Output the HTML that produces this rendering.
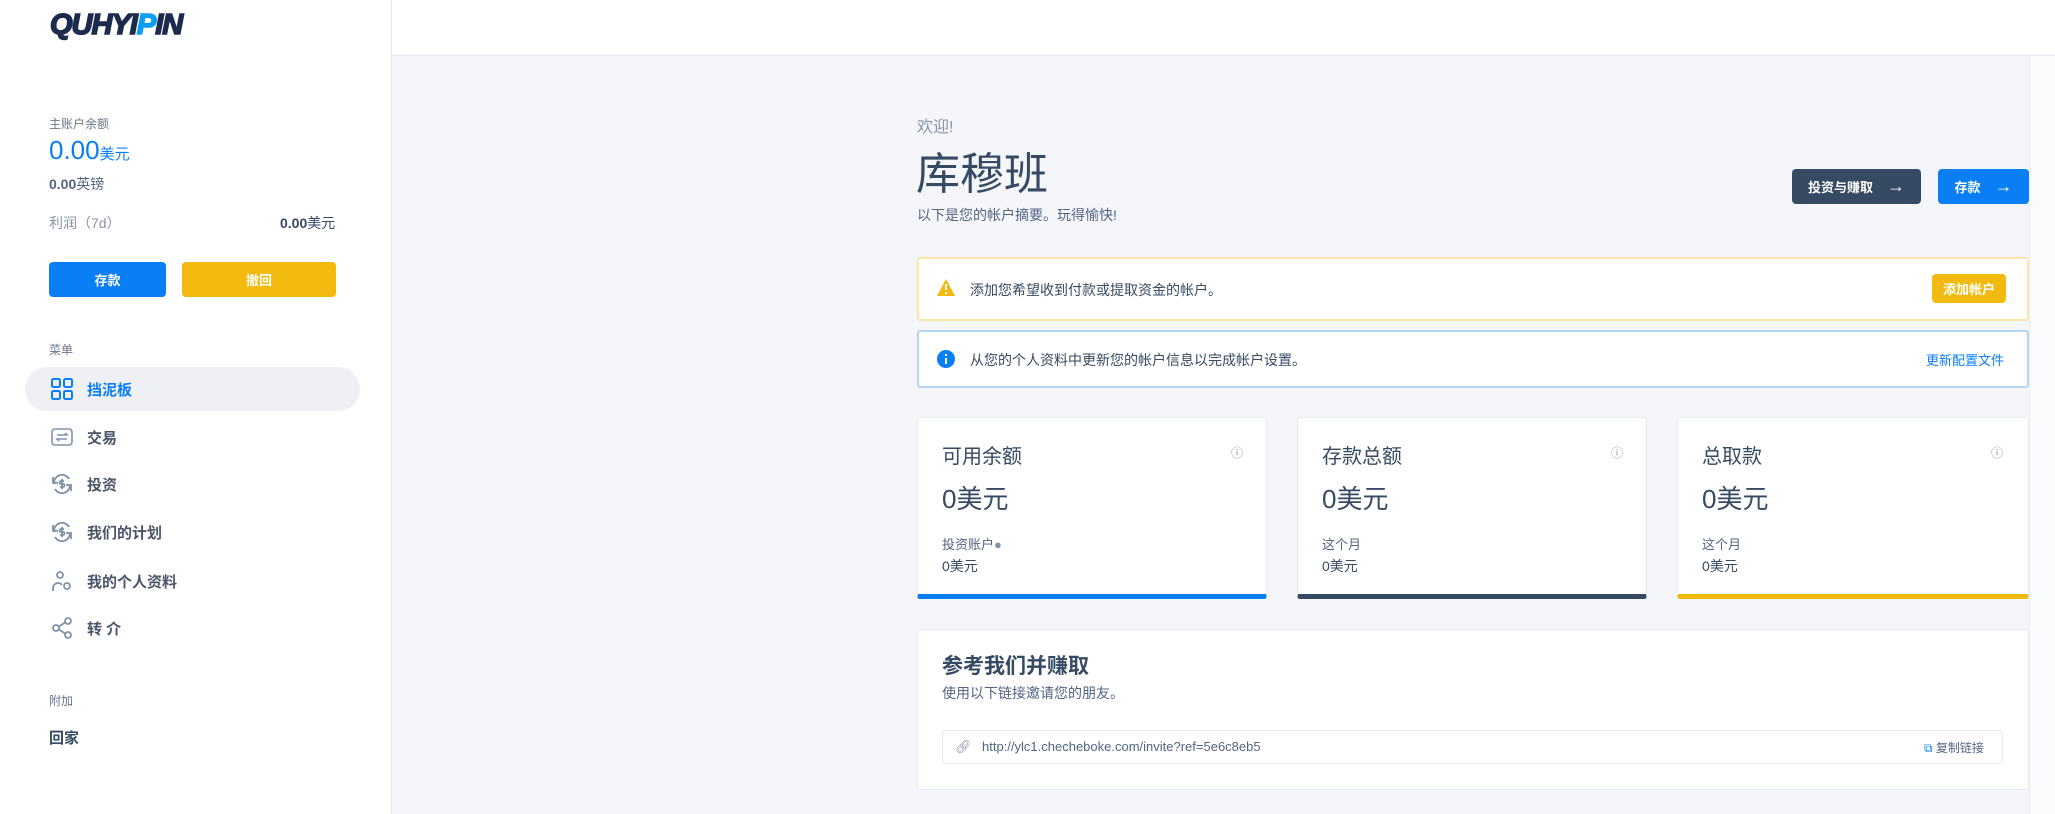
<!DOCTYPE html>
<html><head><meta charset="utf-8"><style>
*{box-sizing:border-box;margin:0;padding:0}
body{width:2055px;height:814px;overflow:hidden;background:#f5f6fa;font-family:"Liberation Sans","Noto Sans CJK SC",sans-serif;color:#364a63;position:relative}
.side{position:absolute;left:0;top:0;width:392px;height:814px;background:#fff;border-right:1px solid #e5e9f2}
.hdr{position:absolute;left:392px;top:0;right:0;height:56px;background:#fff;border-bottom:1px solid #e5e9f2}
.sb{position:absolute;left:2029px;top:56px;width:26px;height:758px;background:#fafbfd;border-left:1px solid #eceef3}
.logo{position:absolute;left:50px;top:9px;font:italic bold 29px "Liberation Sans",sans-serif;color:#1c2b4d;letter-spacing:-1px;-webkit-text-stroke:1.6px #1c2b4d}
.logo b{color:#0d9ef2;-webkit-text-stroke:1.6px #0d9ef2}
.t{position:absolute;white-space:nowrap}
.btn{position:absolute;border-radius:4px;color:#fff;font-size:13px;font-weight:bold;display:flex;align-items:center;justify-content:center}
.item{position:absolute;left:25px;width:335px;height:44px;display:flex;align-items:center;padding-left:26px;font-size:15px;font-weight:bold;color:#4b5568}
.item svg{width:22px;height:22px;margin-right:14px}
.card{position:absolute;background:#fff;border:1px solid #e5e9f2;border-radius:3px}
</style></head><body>
<div class="side">
<div class="logo">QUHYI<b>P</b>IN</div>
<div class="t" style="left:49px;top:115px;font-size:12px;color:#6b7689">主账户余额</div>
<div class="t" style="left:49px;top:135px;font-size:26px;color:#0a7ff5">0.00<span style="font-size:15px">美元</span></div>
<div class="t" style="left:49px;top:174px;font-size:14px;color:#526484;font-weight:bold">0.00<span style="font-weight:normal">英镑</span></div>
<div class="t" style="left:49px;top:213px;font-size:14px;color:#8a94a6">利润（7d）</div>
<div class="t" style="left:280px;top:213px;font-size:14px;color:#364a63"><b>0.00</b>美元</div>
<div class="btn" style="left:49px;top:262px;width:117px;height:35px;background:#0a7ff5">存款</div>
<div class="btn" style="left:182px;top:262px;width:154px;height:35px;background:#f2b90f">撤回</div>
<div class="t" style="left:49px;top:341px;font-size:12px;color:#6b7689">菜单</div>
<div class="item" style="top:367px;background:#eef0f6;border-radius:22px;color:#0a7ff5"><svg viewBox="0 0 22 22" fill="none" stroke="#0a7ff5" stroke-width="2"><rect x="1" y="1" width="8" height="8" rx="1.5"/><rect x="13" y="1" width="8" height="8" rx="1.5"/><rect x="1" y="13" width="8" height="8" rx="1.5"/><rect x="13" y="13" width="8" height="8" rx="1.5"/></svg>挡泥板</div>
<div class="item" style="top:415px"><svg viewBox="0 0 22 22" fill="none" stroke="#8092ab" stroke-width="1.6"><rect x="1" y="3" width="20" height="16" rx="3"/><path d="M6 9h10l-2-2M16 13H6l2 2"/></svg>交易</div>
<div class="item" style="top:462px"><svg viewBox="0 0 22 22" fill="none" stroke="#8092ab" stroke-width="1.8"><path d="M3 10a8 8 0 0 1 15-4M19 12a8 8 0 0 1-15 4M2 4v6h5M20 18v-6h-5"/><path d="M13 8h-3a1.5 1.5 0 0 0 0 3h2a1.5 1.5 0 0 1 0 3H9M11 6v10"/></svg>投资</div>
<div class="item" style="top:510px"><svg viewBox="0 0 22 22" fill="none" stroke="#8092ab" stroke-width="1.8"><path d="M3 10a8 8 0 0 1 15-4M19 12a8 8 0 0 1-15 4M2 4v6h5M20 18v-6h-5"/><path d="M13 8h-3a1.5 1.5 0 0 0 0 3h2a1.5 1.5 0 0 1 0 3H9M11 6v10"/></svg>我们的计划</div>
<div class="item" style="top:559px"><svg viewBox="0 0 22 22" fill="none" stroke="#8092ab" stroke-width="1.8"><circle cx="9" cy="5" r="3"/><path d="M2 21v-3a5 5 0 0 1 9-3"/><circle cx="16" cy="16" r="3"/></svg>我的个人资料</div>
<div class="item" style="top:606px"><svg viewBox="0 0 22 22" fill="none" stroke="#8092ab" stroke-width="1.8"><circle cx="5" cy="11" r="3"/><circle cx="17" cy="4" r="3"/><circle cx="17" cy="18" r="3"/><path d="M8 9.5l6-4M8 12.5l6 4"/></svg>转 介</div>
<div class="t" style="left:49px;top:692px;font-size:12px;color:#6b7689">附加</div>
<div class="t" style="left:49px;top:727px;font-size:15px;font-weight:bold;color:#364a63">回家</div>
</div>
<div class="hdr"></div>
<div class="sb"></div>
<div class="t" style="left:917px;top:113px;font-size:16px;color:#8a94a6">欢迎!</div>
<div class="t" style="left:916px;top:138px;font-size:44px;color:#364a63">库穆班</div>
<div class="t" style="left:917px;top:205px;font-size:14px;color:#526484">以下是您的帐户摘要。玩得愉快!</div>
<div class="btn" style="left:1792px;top:169px;width:129px;height:35px;background:#364a63">投资与赚取 <span style="margin-left:14px;font-size:18px">→</span></div>
<div class="btn" style="left:1938px;top:169px;width:91px;height:35px;background:#0a7ff5">存款 <span style="margin-left:14px;font-size:18px">→</span></div>
<div class="card" style="left:917px;top:257px;width:1112px;height:64px;border:2px solid #fbe8a9"></div>
<svg style="position:absolute;left:937px;top:279px" width="18" height="17" viewBox="0 0 18 17"><path d="M9 0L18 17H0Z" fill="#f2b90f"/><path d="M9 5v6M9 13v2" stroke="#fff" stroke-width="2"/></svg>
<div class="t" style="left:970px;top:280px;font-size:14px;color:#364a63">添加您希望收到付款或提取资金的帐户。</div>
<div class="btn" style="left:1932px;top:274px;width:74px;height:29px;background:#f2b90f">添加帐户</div>
<div class="card" style="left:917px;top:330px;width:1112px;height:58px;border:2px solid #b6d4f3"></div>
<svg style="position:absolute;left:937px;top:350px" width="18" height="18" viewBox="0 0 18 18"><circle cx="9" cy="9" r="9" fill="#0a7ff5"/><path d="M9 8v6M9 4v2" stroke="#fff" stroke-width="2"/></svg>
<div class="t" style="left:970px;top:350px;font-size:14px;color:#364a63">从您的个人资料中更新您的帐户信息以完成帐户设置。</div>
<div class="t" style="left:1926px;top:350px;font-size:13px;color:#0a7ff5">更新配置文件</div>
<div class="card" style="left:917px;top:417px;width:350px;height:182px;border-bottom:5px solid #0a7ff5"></div>
<div class="card" style="left:1297px;top:417px;width:350px;height:182px;border-bottom:5px solid #364a63"></div>
<div class="card" style="left:1677px;top:417px;width:352px;height:182px;border-bottom:5px solid #f2b90f"></div>
<div class="t" style="left:942px;top:440px;font-size:20px;color:#364a63">可用余额</div>
<div class="t" style="left:1322px;top:440px;font-size:20px;color:#364a63">存款总额</div>
<div class="t" style="left:1702px;top:440px;font-size:20px;color:#364a63">总取款</div>
<div class="t" style="left:1231px;top:444px;font-size:12px;color:#8a94a6">ⓘ</div>
<div class="t" style="left:1611px;top:444px;font-size:12px;color:#8a94a6">ⓘ</div>
<div class="t" style="left:1991px;top:444px;font-size:12px;color:#8a94a6">ⓘ</div>
<div class="t" style="left:942px;top:479px;font-size:26px;color:#364a63">0美元</div>
<div class="t" style="left:1322px;top:479px;font-size:26px;color:#364a63">0美元</div>
<div class="t" style="left:1702px;top:479px;font-size:26px;color:#364a63">0美元</div>
<div class="t" style="left:942px;top:534px;font-size:13px;color:#526484">投资账户<span style="color:#8092ab">●</span></div>
<div class="t" style="left:1322px;top:534px;font-size:13px;color:#526484">这个月</div>
<div class="t" style="left:1702px;top:534px;font-size:13px;color:#526484">这个月</div>
<div class="t" style="left:942px;top:556px;font-size:14px;color:#364a63">0美元</div>
<div class="t" style="left:1322px;top:556px;font-size:14px;color:#364a63">0美元</div>
<div class="t" style="left:1702px;top:556px;font-size:14px;color:#364a63">0美元</div>
<div class="card" style="left:917px;top:629px;width:1112px;height:161px"></div>
<div class="t" style="left:942px;top:650px;font-size:21px;font-weight:bold;color:#364a63">参考我们并赚取</div>
<div class="t" style="left:942px;top:683px;font-size:14px;color:#526484">使用以下链接邀请您的朋友。</div>
<div class="card" style="left:942px;top:730px;width:1061px;height:34px;border-radius:4px"></div>
<div class="t" style="left:955px;top:739px;font-size:13px;color:#8a94a6">🔗︎</div>
<div class="t" style="left:982px;top:739px;font-size:13px;color:#526484">http://ylc1.checheboke.com/invite?ref=5e6c8eb5</div>
<div class="t" style="left:1924px;top:739px;font-size:12px;color:#526484"><span style="color:#0a7ff5">⧉</span> 复制链接</div>
</body></html>
